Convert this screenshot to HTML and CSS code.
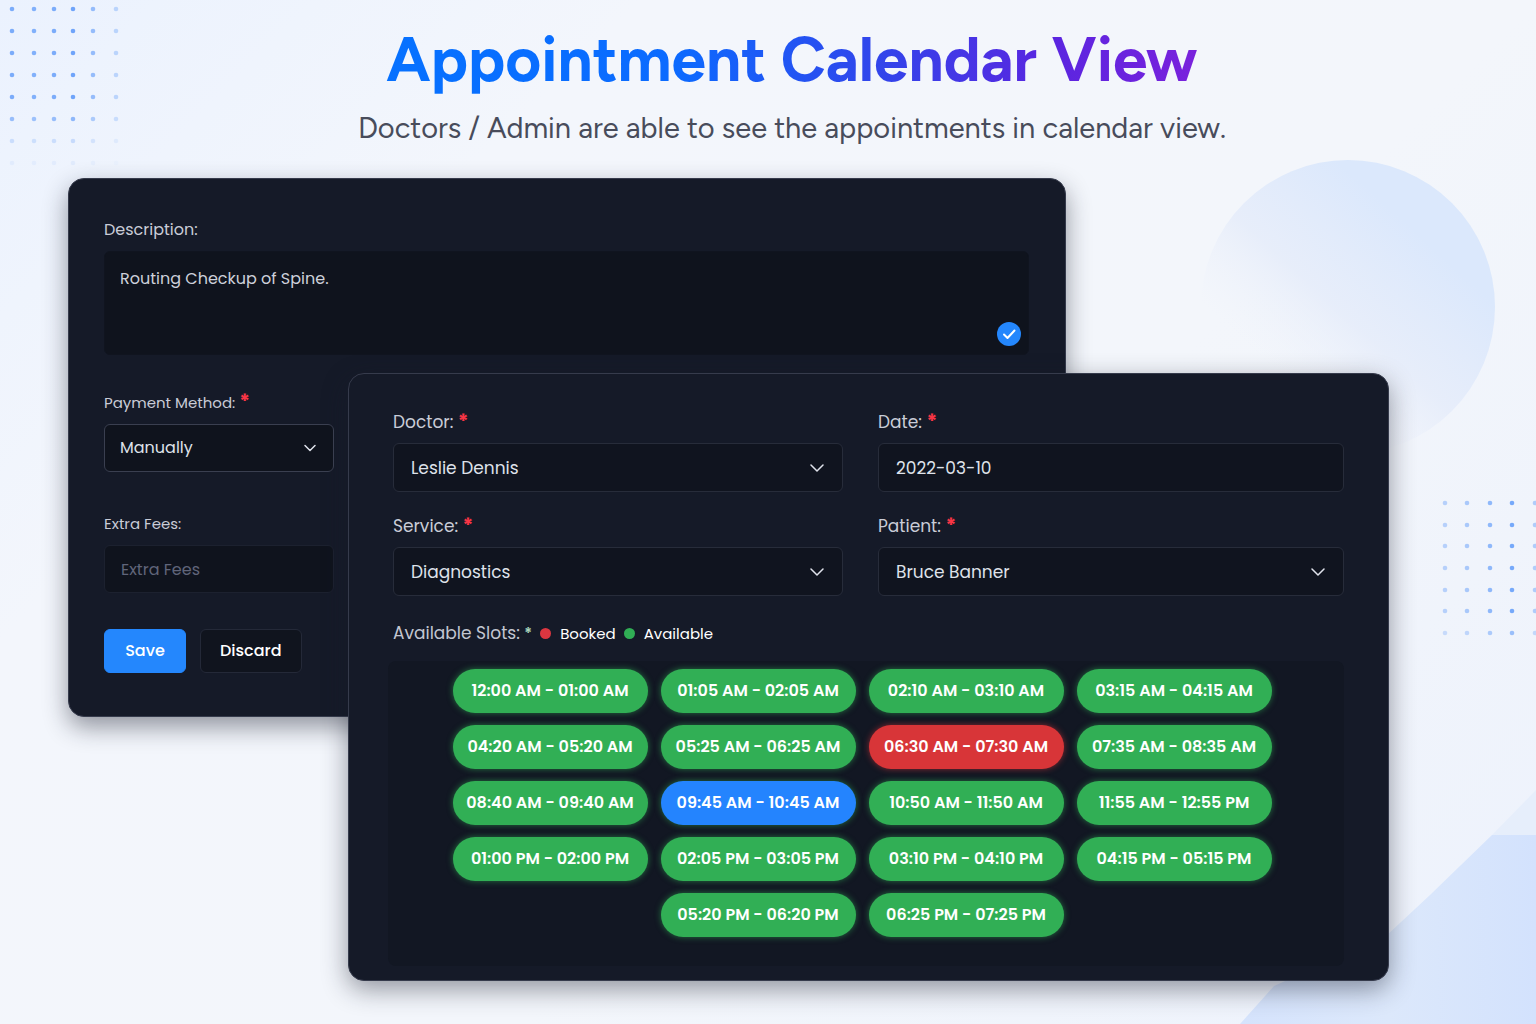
FILE: index.html
```
<!DOCTYPE html>
<html lang="en">
<head>
    <meta charset="UTF-8">
    <meta name="viewport" content="width=device-width, initial-scale=1.0">
    <title>Appointment Calendar View</title>
    <link rel="stylesheet" href="styles.css">
</head>
<body>
    <!-- Background decorations -->
    <svg class="deco deco-dots-left" width="130" height="175" viewBox="0 0 130 175" fill="#6fa4fa" aria-hidden="true">
        <g id="dots-left">
            <circle cx="12" cy="9" r="2.3" opacity="0.9"/>
            <circle cx="34" cy="9" r="2.3" opacity="0.85"/>
            <circle cx="54" cy="9" r="2.3" opacity="0.9"/>
            <circle cx="73" cy="9" r="2.3"/>
            <circle cx="93" cy="9" r="2.3" opacity="0.7"/>
            <circle cx="116" cy="9" r="2.3" opacity="0.4"/>
        </g>
        <use href="#dots-left" y="22"/>
        <use href="#dots-left" y="44"/>
        <use href="#dots-left" y="66"/>
        <use href="#dots-left" y="88"/>
        <use href="#dots-left" y="110" opacity="0.75"/>
        <use href="#dots-left" y="132" opacity="0.3"/>
        <use href="#dots-left" y="154" opacity="0.1"/>
    </svg>
    <svg class="deco deco-circle" width="294" height="294" viewBox="0 0 294 294" aria-hidden="true">
        <defs>
            <linearGradient id="circle-fill" x1="0.9" y1="0.4" x2="0.4" y2="0.95">
                <stop offset="0" stop-color="#dbe8fc"/>
                <stop offset="0.5" stop-color="#e5ecfa" stop-opacity="0.85"/>
                <stop offset="0.9" stop-color="#eef2fb" stop-opacity="0"/>
            </linearGradient>
        </defs>
        <circle cx="147" cy="147" r="147" fill="url(#circle-fill)"/>
    </svg>
    <svg class="deco deco-dots-right" width="96" height="140" viewBox="0 0 96 140" fill="#6fa4fa" aria-hidden="true">
        <g id="dots-right">
            <circle cx="5" cy="5" r="2.3" opacity="0.45"/>
            <circle cx="27" cy="5" r="2.3" opacity="0.55"/>
            <circle cx="50" cy="5" r="2.3" opacity="0.75"/>
            <circle cx="72" cy="5" r="2.3" opacity="0.95"/>
            <circle cx="95" cy="5" r="2.3" opacity="0.5"/>
        </g>
        <use href="#dots-right" y="22"/>
        <use href="#dots-right" y="43"/>
        <use href="#dots-right" y="65"/>
        <use href="#dots-right" y="87"/>
        <use href="#dots-right" y="108"/>
        <use href="#dots-right" y="130" opacity="0.7"/>
    </svg>
    <svg class="deco deco-corner" width="320" height="260" viewBox="0 0 320 260" aria-hidden="true">
        <defs>
            <linearGradient id="corner-fill" x1="0" y1="0" x2="1" y2="0">
                <stop offset="0" stop-color="#d5e3fc"/>
                <stop offset="0.5" stop-color="#dce8fb"/>
                <stop offset="1" stop-color="#d3e2fd"/>
            </linearGradient>
        </defs>
        <path d="M320 26 L276 71 H320 Z" fill="#e6eefb"/>
        <path d="M276 71 H320 V260 H24 L58 222 L170 172 L214 131 Z" fill="url(#corner-fill)"/>
    </svg>

    <header class="page-header">
        <h1>Appointment Calendar View</h1>
        <p>Doctors / Admin are able to see the appointments in calendar view.</p>
    </header>

    <main class="stage">
        <form class="card payment-card">
            <div class="field">
                <label for="description">Description:</label>
                <div class="control">
                    <textarea id="description">Routing Checkup of Spine.</textarea>
                    <svg class="check" width="24" height="24" viewBox="0 0 24 24" aria-hidden="true">
                        <circle cx="12" cy="12" r="12" fill="#2487fd"/>
                        <path d="M7 12.5 L10.5 16 L17.5 8.5" fill="none" stroke="#fff" stroke-width="2" stroke-linecap="round" stroke-linejoin="round"/>
                    </svg>
                </div>
            </div>
            <div class="field field-short field-method">
                <label for="method">Payment Method: <span class="required">*</span></label>
                <div class="control">
                    <select id="method">
                        <option>Manually</option>
                    </select>
                    <svg class="chevron" width="14" height="14" viewBox="0 0 14 14" aria-hidden="true"><path d="M2 4.5 L7 9.5 L12 4.5"/></svg>
                </div>
            </div>
            <div class="field field-short">
                <label for="fees">Extra Fees:</label>
                <input type="text" id="fees" placeholder="Extra Fees">
            </div>
            <div class="actions">
                <button type="button" class="btn btn-save">Save</button>
                <button type="button" class="btn btn-discard">Discard</button>
            </div>
        </form>

        <form class="card booking-card">
            <div class="booking-grid">
                <div>
                    <label for="doctor">Doctor: <span class="required">*</span></label>
                    <div class="control">
                        <select id="doctor">
                            <option>Leslie Dennis</option>
                        </select>
                        <svg class="chevron" width="14" height="14" viewBox="0 0 14 14" aria-hidden="true"><path d="M1 4 L7 10 L13 4"/></svg>
                    </div>
                </div>
                <div>
                    <label for="date">Date: <span class="required">*</span></label>
                    <input type="text" id="date" value="2022-03-10">
                </div>
                <div>
                    <label for="service">Service: <span class="required">*</span></label>
                    <div class="control">
                        <select id="service">
                            <option>Diagnostics</option>
                        </select>
                        <svg class="chevron" width="14" height="14" viewBox="0 0 14 14" aria-hidden="true"><path d="M1 4 L7 10 L13 4"/></svg>
                    </div>
                </div>
                <div>
                    <label for="patient">Patient: <span class="required">*</span></label>
                    <div class="control">
                        <select id="patient">
                            <option>Bruce Banner</option>
                        </select>
                        <svg class="chevron" width="14" height="14" viewBox="0 0 14 14" aria-hidden="true"><path d="M1 4 L7 10 L13 4"/></svg>
                    </div>
                </div>
            </div>

            <div class="legend">
                <span class="legend-title">Available Slots: <span class="star">*</span></span>
                <span class="legend-item"><i class="dot dot-booked"></i>Booked</span>
                <span class="legend-item"><i class="dot dot-available"></i>Available</span>
            </div>

            <div class="slots">
                <button type="button" class="slot">12:00 AM - 01:00 AM</button>
                <button type="button" class="slot">01:05 AM - 02:05 AM</button>
                <button type="button" class="slot">02:10 AM - 03:10 AM</button>
                <button type="button" class="slot">03:15 AM - 04:15 AM</button>
                <button type="button" class="slot">04:20 AM - 05:20 AM</button>
                <button type="button" class="slot">05:25 AM - 06:25 AM</button>
                <button type="button" class="slot slot-booked">06:30 AM - 07:30 AM</button>
                <button type="button" class="slot">07:35 AM - 08:35 AM</button>
                <button type="button" class="slot">08:40 AM - 09:40 AM</button>
                <button type="button" class="slot slot-selected">09:45 AM - 10:45 AM</button>
                <button type="button" class="slot">10:50 AM - 11:50 AM</button>
                <button type="button" class="slot">11:55 AM - 12:55 PM</button>
                <button type="button" class="slot">01:00 PM - 02:00 PM</button>
                <button type="button" class="slot">02:05 PM - 03:05 PM</button>
                <button type="button" class="slot">03:10 PM - 04:10 PM</button>
                <button type="button" class="slot">04:15 PM - 05:15 PM</button>
                <button type="button" class="slot">05:20 PM - 06:20 PM</button>
                <button type="button" class="slot">06:25 PM - 07:25 PM</button>
            </div>
        </form>
    </main>
</body>
</html>
```
FILE: styles.css
```
* {
    box-sizing: border-box;
}
body {
    margin: 0;
    min-height: 100vh;
    position: relative;
    overflow-x: hidden;
    font-family: Poppins, Inter, sans-serif;
    font-size: 16px;
    line-height: 24px;
    color: #d5d8e2;
    background: linear-gradient(135deg, #ebf2fe 0%, #f3f6fc 25%, #f3f6fb 60%, #edf2fc 100%);
}

/* decorations */
.deco {
    position: absolute;
    z-index: -1;
}
.deco-dots-left {
    top: 0;
    left: 0;
}
.deco-circle {
    top: 160px;
    right: 41px;
}
.deco-dots-right {
    top: 498px;
    right: 0;
}
.deco-corner {
    right: 0;
    bottom: 0;
}

/* header */
.page-header {
    padding: 24px 0 32px 48px;
    text-align: center;
    font-family: Figtree, Lato, sans-serif;
}
.page-header h1 {
    width: fit-content;
    margin: 0 auto;
    font-size: 62px;
    line-height: 72px;
    font-weight: 700;
    background: linear-gradient(90deg, #0671ff 0%, #0b6bff 35%, #3443ea 62%, #5a25e0 82%, #7a22dc 100%);
    -webkit-background-clip: text;
    background-clip: text;
    color: transparent;
}
.page-header p {
    margin: 14px 0 0;
    font-size: 29px;
    line-height: 36px;
    color: #484c5b;
}

/* both cards share one grid cell and overlap */
.stage {
    display: grid;
    align-items: start;
    padding: 0 147px 43px 68px;
}
.card {
    grid-area: 1 / 1;
    background: #151a28;
    border: 1px solid #363b4c;
    border-radius: 16px;
}
.payment-card {
    margin-right: 323px;
    padding: 39px 36px 43px 35px;
    box-shadow: 0 10px 24px rgba(25, 28, 45, 0.45);
}
.booking-card {
    margin: 195px 0 0 280px;
    padding: 36px 44px 14px;
    font-size: 17px;
    box-shadow: 0 8px 26px rgba(25, 28, 45, 0.45);
}

/* form controls */
label {
    display: block;
    margin-bottom: 9px;
    color: #c9ccd7;
}
.required {
    color: #f93545;
    font-size: 20px;
    font-weight: 700;
    line-height: 0;
}
input, select, textarea {
    display: block;
    width: 100%;
    height: 48px;
    padding: 0 16px;
    border: 1px solid #1c212f;
    border-radius: 6px;
    background: #0f131d;
    color: #dfe2ea;
    font: inherit;
    outline: none;
    appearance: none;
}
textarea {
    height: 104px;
    padding: 15px;
    border-color: #10141f;
    color: #cdd0da;
    resize: none;
}
input::placeholder {
    color: #60657a;
    opacity: 1;
}
.control {
    position: relative;
}
.chevron {
    position: absolute;
    top: 50%;
    right: 19px;
    margin-top: -7px;
    fill: none;
    stroke: #e0e3ec;
    stroke-width: 1.5;
    stroke-linecap: round;
    stroke-linejoin: round;
    pointer-events: none;
}
.check {
    position: absolute;
    right: 8px;
    bottom: 9px;
}
.field {
    margin-bottom: 36px;
}
.field-short {
    width: 230px;
}
.field-short label {
    font-size: 15px;
}
.field-method {
    margin-bottom: 40px;
}
.field-method select {
    border-color: #3a3f50;
    padding: 0 15px;
}
.field-method .chevron {
    right: 17px;
}

.actions {
    display: flex;
    gap: 14px;
}
.btn {
    min-width: 82px;
    height: 44px;
    padding: 0 19px;
    border: 1px solid #242938;
    border-radius: 6px;
    background: #10141e;
    color: #fff;
    font: inherit;
    font-weight: 500;
}
.btn-save {
    background: #2487fd;
    border-color: #2487fd;
}

.booking-grid {
    display: grid;
    grid-template-columns: 450fr 466fr;
    gap: 22px 35px;
}
.booking-grid input, .booking-grid select {
    height: 49px;
    border-color: #272c3a;
    background: #10141f;
    padding: 0 17px;
}

/* slots */
.legend {
    display: flex;
    align-items: center;
    gap: 8px;
    margin-top: 25px;
    color: #fff;
    font-size: 15px;
}
.legend-title {
    font-size: 17px;
    color: #c2c6d1;
}
.star {
    color: #a9d4bb;
    font-size: 15px;
    font-weight: 600;
}
.legend-item {
    display: flex;
    align-items: center;
    gap: 9px;
}
.dot {
    width: 11px;
    height: 11px;
    border-radius: 50%;
}
.dot-booked {
    background: #dc3640;
}
.dot-available {
    background: #30ae55;
}
.slots {
    display: flex;
    flex-wrap: wrap;
    justify-content: center;
    gap: 12px 13px;
    margin: 15px 0 0 -5px;
    padding: 8px 28px 29px 20px;
    border-radius: 8px;
    background: #121723;
}
.slot {
    width: 195px;
    height: 44px;
    padding: 0;
    border: 0;
    border-radius: 22px;
    background: #31af55;
    color: #fff;
    font: inherit;
    font-size: 16px;
    font-weight: 600;
    box-shadow: 0 0 6px rgba(49, 175, 85, 0.6);
}
.slot-booked {
    background: #d83538;
    box-shadow: 0 0 6px rgba(216, 53, 56, 0.6);
}
.slot-selected {
    background: #2484fe;
}
```
